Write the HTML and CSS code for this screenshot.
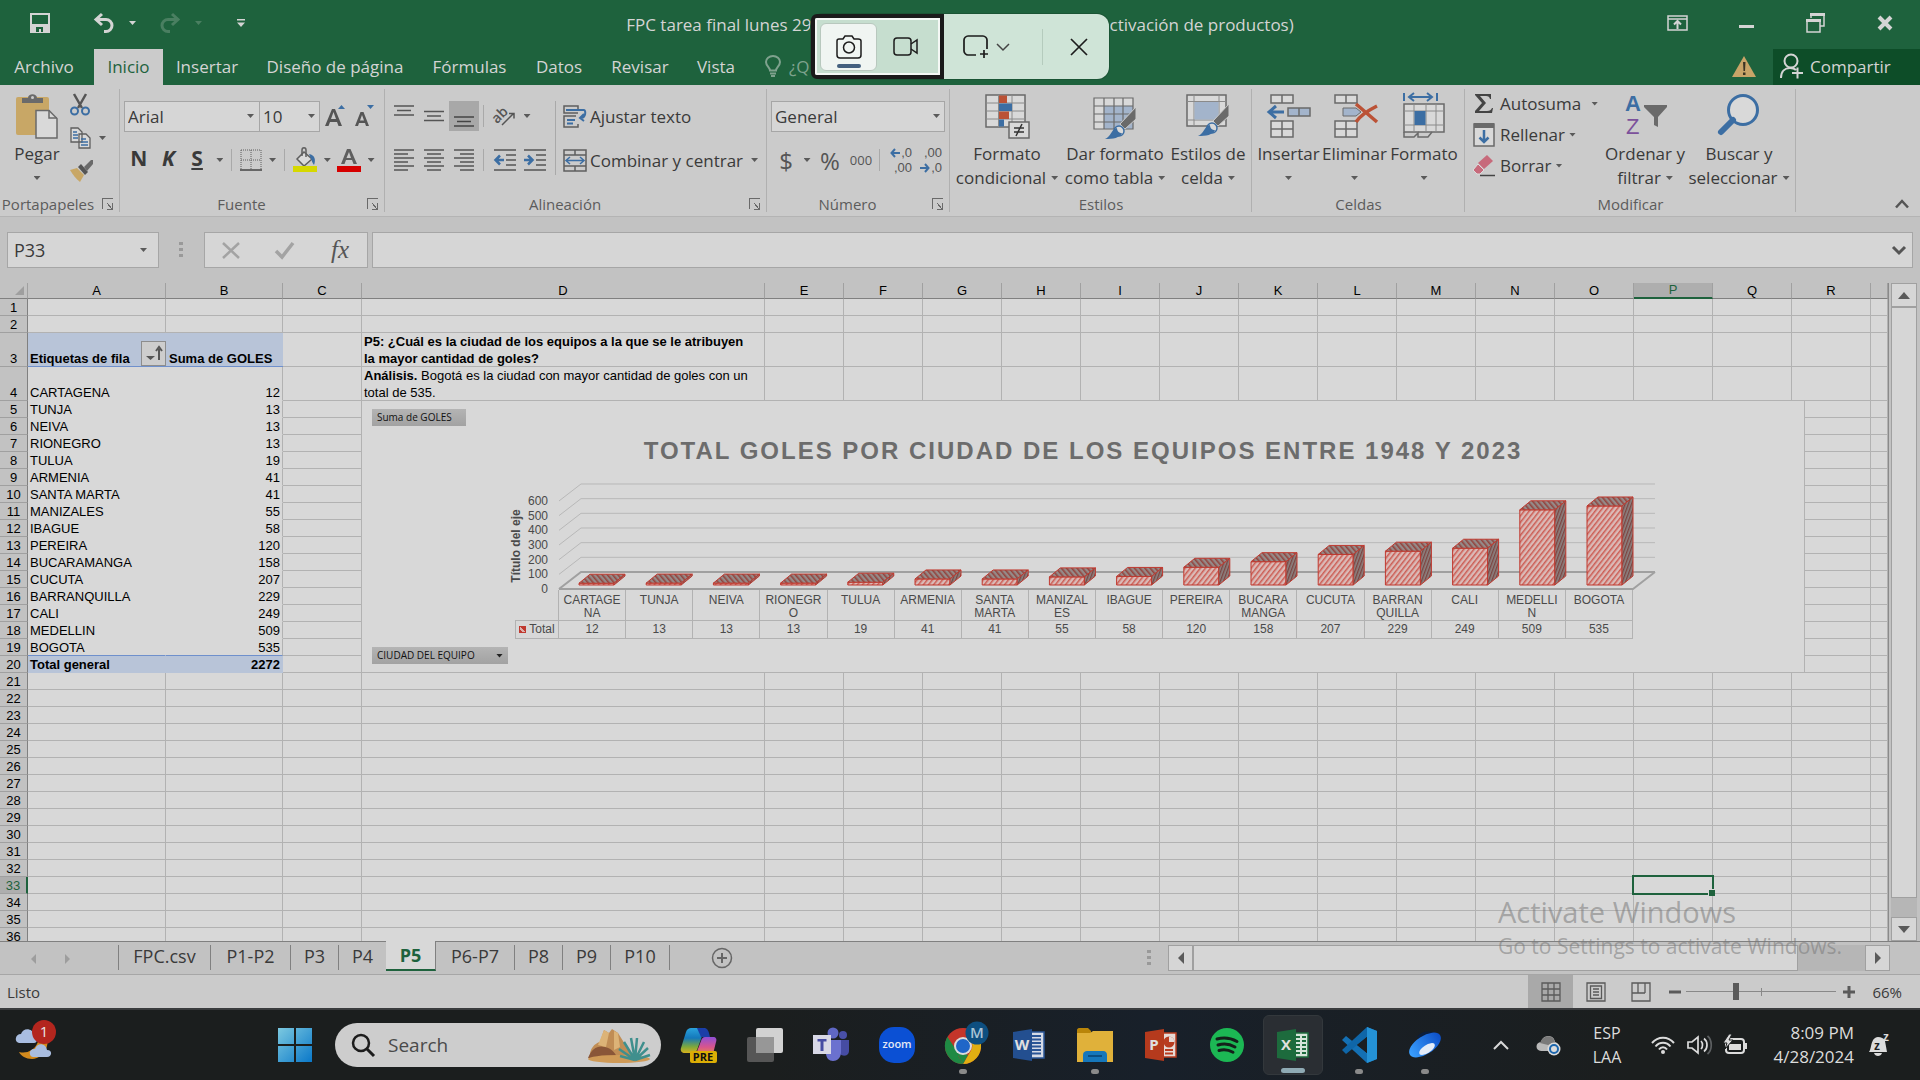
FILE: index.html
```html
<!DOCTYPE html>
<html lang="es">
<head>
<meta charset="utf-8">
<title>FPC tarea final - Excel</title>
<link rel="stylesheet" href="styles.css">
</head>
<body>
<div class="app">
  <header class="titlebar">
    <nav class="quick">
      <button aria-label="Guardar"><svg width="20" height="20"><path d="M1 1h18v18H1z" fill="none" stroke="#d4d4d4" stroke-width="2"/><path d="M2 11h16v8H2z" fill="#d4d4d4"/><path d="M6 14h7v5h-2v-3H9v3H6z" fill="#1e623d"/></svg></button>
      <button class="undo" aria-label="Deshacer"><svg width="22" height="20"><path d="M9 1 3 6.500l6 5.500M4 6.500h9a6 6 0 0 1 0 12h-2" fill="none" stroke="#d4d4d4" stroke-width="3"/></svg></button>
      <i class="caret"></i>
      <button class="redo" aria-label="Rehacer"><svg width="22" height="20"><path d="M13 1l6 5.500-6 5.500M18 6.500H9a6 6 0 0 0 0 12h2" fill="none" stroke="#4a7f61" stroke-width="3"/></svg></button>
      <i class="caret dim"></i>
      <button class="more" aria-label="Personalizar"><svg width="8" height="8"><path d="M0 0h8v1.500H0zM0 3.500h8L4 8z" fill="#d4d4d4"/></svg></button>
    </nav>
    <h1 class="doc"><span>FPC tarea final lunes 29</span><span>ctivación de productos)</span></h1>
    <div class="winctl">
      <button aria-label="Opciones de cinta"><svg width="21" height="16"><path d="M1 1h19v14H1zM1 4h19" fill="none" stroke="#d4d4d4" stroke-width="1.500"/><path d="M10.500 14V6M7 9.500 10.500 6 14 9.500" fill="none" stroke="#d4d4d4" stroke-width="2"/></svg></button>
      <button aria-label="Minimizar"><svg width="16" height="16"><path d="M0 10h15v3H0z" fill="#d4d4d4"/></svg></button>
      <button aria-label="Restaurar"><svg width="20" height="20"><path d="M5 5V2h13v11h-4" fill="none" stroke="#d4d4d4" stroke-width="1.500"/><path d="M4 0h15v3H4zM0 6h15v3H0z" fill="#d4d4d4"/><path d="M1 8h13v11H1z" fill="none" stroke="#d4d4d4" stroke-width="1.500"/></svg></button>
      <button aria-label="Cerrar"><svg width="16" height="16"><path d="M2 2l12 12M14 2 2 14" stroke="#d4d4d4" stroke-width="4"/></svg></button>
    </div>
  </header>

  <div class="tabbar">
    <nav class="tabs">
      <button class="file">Archivo</button><button class="on">Inicio</button><button>Insertar</button><button>Diseño de página</button><button>Fórmulas</button><button>Datos</button><button>Revisar</button><button>Vista</button>
      <button class="tell"><svg width="16" height="22"><path d="M5 15.500c0-3-4-4.500-4-8.500a7 6 0 0 1 14 0c0 4-4 5.500-4 8.500zM5 18.500h6M6 21h4" fill="none" stroke="#7fa28e" stroke-width="2"/></svg>¿Q</button>
    </nav>
    <div class="tabright">
      <svg class="warn" width="24" height="22"><path d="M12 0 24 21H0z" fill="#c9a468"/><path d="M11 6h2.500l-.5 9h-1.500zM11 16.500h2.500V19H11z" fill="#3c3424"/></svg>
      <button class="share"><svg width="24" height="26"><circle cx="11" cy="8" r="6.500" fill="none" stroke="#d4d4d4" stroke-width="2"/><path d="M1 25c0-7 4-10 9-10 3 0 5 1 6 2M12 20h11M17.500 14.500v11" fill="none" stroke="#d4d4d4" stroke-width="2"/></svg>Compartir</button>
    </div>
  </div>

  <section class="ribbon">
    <div class="group">
      <div class="body clip">
        <button class="big paste"><svg width="42" height="46"><rect x="0" y="4" width="33" height="38" rx="2" fill="#c8a766"/><path d="M6 10V5h6c0-5 9-5 9 0h6v5z" fill="#6a6a6a"/><circle cx="16.500" cy="4.500" r="1.500" fill="#ccc"/><path d="M20 17.500h13l8 8V45H20z" fill="#d9d9d9" stroke="#6a6a6a" stroke-width="1.500"/><path d="M33 17v8h8" fill="none" stroke="#6a6a6a" stroke-width="1.500"/></svg><span>Pegar</span><span class="only"><i class="caret"></i></span></button>
        <div class="stack">
          <button aria-label="Cortar"><svg width="20" height="22"><path d="M4 0l8 14M16 0 8 14" stroke="#555" stroke-width="2.500"/><circle cx="4.500" cy="17" r="3.500" fill="none" stroke="#3c6ea3" stroke-width="2"/><circle cx="15.500" cy="17" r="3.500" fill="none" stroke="#3c6ea3" stroke-width="2"/></svg></button>
          <button aria-label="Copiar"><svg width="21" height="22"><g fill="#d9d9d9" stroke="#5f5f5f" stroke-width="1.300"><path d="M1 1h7l4 4v10H1zM9 7h7l4 4v10H9z"/></g><path d="M3 5h4M3 8h5M3 11h5M11 12h5M11 15h7M11 18h7" stroke="#3c6ea3" stroke-width="1.500"/></svg><i class="caret"></i></button>
          <button aria-label="Copiar formato"><svg width="24" height="22"><path d="M0 10l7-2 7 7-4 7C6 19 3 15 0 10z" fill="#c8a766"/><path d="M8 7l3-3 7 8-3 3z" fill="#555"/><path d="M14 7l7-7h2v4l-6 7z" fill="#6a6a6a"/></svg></button>
        </div>
      </div>
      <footer><span>Portapapeles</span><button class="launch" aria-label="Portapapeles"></button></footer>
    </div>

    <div class="group">
      <div class="body rows">
        <div class="row">
          <label class="combo font"><select aria-label="Fuente"><option>Arial</option></select></label>
          <label class="combo size"><select aria-label="Tamaño"><option>10</option></select></label>
          <button class="w30" aria-label="Aumentar fuente"><svg width="22" height="22"><path d="M1 21 8 4h3l7 17h-3.500l-1.500-4H6l-1.500 4zM7 14h5L9.500 7z" fill="#555"/><path d="M14 4l3.500-4L21 4z" fill="#3c6ea3"/></svg></button>
          <button class="w30" aria-label="Disminuir fuente"><svg width="20" height="22"><path d="M0 21 5.500 7h3L14 21h-3l-1-3H4l-1 3zM5 15.500h4L7 10z" fill="#555"/><path d="M12 0h7l-3.500 4z" fill="#3c6ea3"/></svg></button>
        </div>
        <div class="row">
          <button class="w30 fmt"><b>N</b></button><button class="w30 fmt"><b><em>K</em></b></button><button class="w28 fmt"><b><u>S</u></b></button><span class="w18"><i class="caret"></i></span>
          <i class="sep s1"></i>
          <button class="w22" aria-label="Bordes"><svg width="22" height="22"><path d="M1 1h20v20M1 1v20M11 1v20M1 11h20" fill="none" stroke="#5f5f5f" stroke-dasharray="1 1"/><path d="M0 21h22" stroke="#444" stroke-width="1.500"/></svg></button><span class="w22"><i class="caret"></i></span>
          <i class="sep s2"></i>
          <button class="w24" aria-label="Relleno"><svg width="24" height="24"><path d="M4 11l7-7 8 7-8 7z" fill="#dadada" stroke="#5f5f5f" stroke-width="1.500"/><path d="M9 8V2c0-3 4-3 4 0v7" fill="none" stroke="#5f5f5f" stroke-width="1.500"/><path d="M16 6c6 1 7 6 5 11-2-2-2-5-3-6z" fill="#3c6ea3"/><path d="M0 18h24v6H0z" fill="#d6d800"/></svg></button><span class="w20"><i class="caret"></i></span>
          <button class="w24" aria-label="Color de fuente"><svg width="24" height="24"><path d="M4 16 10 1h3.500L20 16h-3.500l-1.500-4H9l-1.500 4zM9.500 10h4.500L12 4z" fill="#5f5f5f"/><path d="M0 18h24v6H0z" fill="#d60000"/></svg></button><span class="w20"><i class="caret"></i></span>
        </div>
      </div>
      <footer><span>Fuente</span><button class="launch" aria-label="Fuente"></button></footer>
    </div>

    <div class="group">
      <div class="body align">
        <div class="rows">
          <div class="row">
            <button class="w30" aria-label="Superior"><svg width="20" height="22"><path d="M0 1h20M3 5.500h14M0 10h20" stroke="#555" stroke-width="1.500"/></svg></button>
            <button class="w30" aria-label="Medio"><svg width="20" height="22"><path d="M0 6.500h20M3 11h14M0 15.500h20" stroke="#555" stroke-width="1.500"/></svg></button>
            <button class="w30 pressed" aria-label="Inferior"><svg width="20" height="22"><path d="M0 12h20M3 16.500h14M0 21h20" stroke="#444" stroke-width="1.500"/></svg></button>
            <i class="sep s3"></i>
            <button class="w30" aria-label="Orientación"><svg width="22" height="22"><text x="-2" y="13" transform="rotate(-45 8 10)" class="ab">ab</text><path d="M8 20 19 9M15 8.500h5v5" fill="none" stroke="#555" stroke-width="1.500"/></svg></button><span class="w14"><i class="caret"></i></span>
          </div>
          <div class="row">
            <button class="w30" aria-label="Izquierda"><svg width="20" height="22"><path d="M0 1h20M0 5h14M0 9h20M0 13h14M0 17h20M0 21h14" stroke="#555" stroke-width="1.500"/></svg></button>
            <button class="w30" aria-label="Centro"><svg width="20" height="22"><path d="M0 1h20M3 5h14M0 9h20M3 13h14M0 17h20M3 21h14" stroke="#555" stroke-width="1.500"/></svg></button>
            <button class="w30" aria-label="Derecha"><svg width="20" height="22"><path d="M0 1h20M6 5h14M0 9h20M6 13h14M0 17h20M6 21h14" stroke="#555" stroke-width="1.500"/></svg></button>
            <i class="sep s3"></i>
            <button class="w30" aria-label="Disminuir sangría"><svg width="22" height="22"><path d="M0 1h22M12 6h10M12 11h10M12 16h10M0 21h22" stroke="#555" stroke-width="1.500"/><path d="M10 11H2M6 6.500 1.500 11 6 15.500" fill="none" stroke="#3c6ea3" stroke-width="2.500"/></svg></button>
            <button class="w30" aria-label="Aumentar sangría"><svg width="22" height="22"><path d="M0 1h22M12 6h10M12 11h10M12 16h10M0 21h22" stroke="#555" stroke-width="1.500"/><path d="M0 11h8M4 6.500 8.500 11 4 15.500" fill="none" stroke="#3c6ea3" stroke-width="2.500"/></svg></button>
          </div>
        </div>
        <i class="sep long"></i>
        <div class="rows wide">
          <button class="row text"><svg width="24" height="23"><g fill="none" stroke="#5f5f5f" stroke-width="1.500"><path d="M15 5V1H1v7h14M15 19v3H1V11h12"/></g><path d="M3 5h18c2 0 2 8-3 8M21 9l-4 4 4 3M4 15h8M4 18.500h6" fill="none" stroke="#3c6ea3" stroke-width="2"/></svg>Ajustar texto</button>
          <button class="row text"><svg width="24" height="23"><path d="M1 1h22v21H1zM1 6h22M1 17h22M12 1v5M12 17v5" fill="none" stroke="#5f5f5f" stroke-width="1.500"/><path d="M3 11.500h18M7 8l-4 3.500L7 15M17 8l4 3.500-4 3.500" fill="none" stroke="#3c6ea3" stroke-width="1.500"/></svg>Combinar y centrar<i class="caret"></i></button>
        </div>
      </div>
      <footer><span>Alineación</span><button class="launch" aria-label="Alineación"></button></footer>
    </div>

    <div class="group">
      <div class="body rows">
        <div class="row"><label class="combo num"><select aria-label="Formato de número"><option>General</option></select></label></div>
        <div class="row">
          <button class="w30 money">$</button><span class="w12"><i class="caret"></i></span><button class="w34 money">%</button><button class="w28 zeros">000</button>
          <i class="sep s4"></i>
          <button class="w30 dec" aria-label="Aumentar decimales"><span><svg width="10" height="10"><path d="M10 5H2M5 1 1.500 5 5 9" fill="none" stroke="#3c6ea3" stroke-width="2"/></svg>,0</span><span>,00</span></button>
          <button class="w30 dec" aria-label="Disminuir decimales"><span>,00</span><span><svg width="10" height="10"><path d="M0 5h8M5 1l3.500 4L5 9" fill="none" stroke="#3c6ea3" stroke-width="2"/></svg>,0</span></button>
        </div>
      </div>
      <footer><span>Número</span><button class="launch" aria-label="Número"></button></footer>
    </div>

    <div class="group">
      <div class="body bigs styles">
        <button class="big"><svg width="46" height="46"><path d="M2 2h39v32H2z" fill="#d9d9d9" stroke="#6a6a6a" stroke-width="1.500"/><path d="M14.500 2v32M28 2v32M2 10h39M2 18h39M2 26h39" stroke="#8a8a8a"/><path d="M15 2.500h8v7.500h-8zM15 18.500h10v7.500H15z" fill="#bb5236"/><path d="M15 10.500h13v7.500H15zM15 26.500h5v7h-5z" fill="#3c6ea3"/><path d="M25 29h20v16H25z" fill="#d9d9d9" stroke="#6a6a6a" stroke-width="1.500"/><path d="M30 35h10M30 39h10M38 31l-6 12" stroke="#333" stroke-width="1.500"/></svg><span>Formato</span><span>condicional<i class="caret"></i></span></button>
        <button class="big"><svg width="46" height="46"><path d="M2 5h39v31H2z" fill="#d9d9d9"/><path d="M12 13h29v23H12z" fill="#a3b4cb"/><path d="M2 5h39v31H2zM2 13h39M2 21h39M2 29h39M12 5v31M22 5v31M31 5v31" fill="none" stroke="#6a6a6a" stroke-width="1.200"/><path d="M44 14v12L33 36l-5-5z" fill="#6a6a6a" stroke="#ccc"/><circle cx="27" cy="38" r="5" fill="#d9d9d9" stroke="#3c6ea3" stroke-width="1.500"/><path d="M13 46c6-2 6-10 12-11 0 3 2 5 5 5-2 5-9 6-17 6z" fill="#3c6ea3"/></svg><span>Dar formato</span><span>como tabla<i class="caret"></i></span></button>
        <button class="big"><svg width="46" height="46"><path d="M2 2h39v31H2z" fill="#d9d9d9" stroke="#6a6a6a" stroke-width="1.500"/><path d="M9 2v31M34 2v31M2 8.500h39M2 27h39" stroke="#8a8a8a"/><path d="M9.500 9h24v17.500h-24z" fill="#a3b4cb"/><path d="M44 11v12L33 33l-5-5z" fill="#6a6a6a" stroke="#ccc"/><circle cx="27" cy="35" r="5" fill="#d9d9d9" stroke="#3c6ea3" stroke-width="1.500"/><path d="M13 43c6-2 6-10 12-11 0 3 2 5 5 5-2 5-9 6-17 6z" fill="#3c6ea3"/></svg><span>Estilos de</span><span>celda<i class="caret"></i></span></button>
      </div>
      <footer><span>Estilos</span></footer>
    </div>

    <div class="group">
      <div class="body bigs cells">
        <button class="big"><svg width="46" height="46"><g fill="#d9d9d9" stroke="#6a6a6a" stroke-width="1.500"><path d="M5 2h22v8H5zM5 28h22v16H5zM5 36h22M16 2v8M16 28v16"/></g><path d="M22 15h22v8H22zM33 15v8" fill="#a3b4cb" stroke="#6a6a6a" stroke-width="1.500"/><path d="M18 19H4M10 13l-7 6 7 6" fill="none" stroke="#3c6ea3" stroke-width="3"/></svg><span>Insertar</span><span class="only"><i class="caret"></i></span></button>
        <button class="big"><svg width="46" height="46"><g fill="#d9d9d9" stroke="#6a6a6a" stroke-width="1.500"><path d="M3 2h22v8H3zM3 28h22v16H3zM3 36h22M14 2v8M14 28v16"/></g><path d="M11 15h13l5 4-5 4H11z" fill="#a3b4cb" stroke="#6a6a6a"/><path d="M24 11c7 6 14 12 21 18M45 13C35 18 28 23 24 29" fill="none" stroke="#bb5236" stroke-width="3.500"/></svg><span>Eliminar</span><span class="only"><i class="caret"></i></span></button>
        <button class="big"><svg width="46" height="46"><path d="M3 0v8M36 0v8M8 4h23M13 0 8 4l5 4M26 0l5 4-5 4" fill="none" stroke="#3c6ea3" stroke-width="2"/><path d="M3 11h40v28H3z" fill="#d9d9d9" stroke="#6a6a6a" stroke-width="1.500"/><path d="M13 11v28M25 11v28M35 11v28M3 18h40M3 32h40" stroke="#8a8a8a"/><path d="M13.500 18h11v14h-11z" fill="#3c6ea3"/><path d="M3 39v5h10l4-4v4h10l4-5" fill="none" stroke="#6a6a6a" stroke-width="1.500"/></svg><span>Formato</span><span class="only"><i class="caret"></i></span></button>
      </div>
      <footer><span>Celdas</span></footer>
    </div>

    <div class="group">
      <div class="body edit">
        <div class="edits">
          <button><svg width="23" height="23"><path d="M2 2h16v5h-1c-.5-2-1.500-3-4-3H7l6 7-7 8h8c3 0 4-1 5-3h1l-1 5H2v-2l7-8-7-8z" fill="#444"/></svg>Autosuma<i class="caret far"></i></button>
          <button><svg width="23" height="24"><path d="M1 1h20v22H1z" fill="#d9d9d9" stroke="#6a6a6a" stroke-width="1.500"/><path d="M1 0h20v5H1z" fill="#6a6a6a"/><path d="M11 7v12M6.500 14.500 11 19l4.500-4.500" fill="none" stroke="#3c6ea3" stroke-width="2.500"/></svg>Rellenar<i class="caret"></i></button>
          <button><svg width="23" height="22"><path d="M14 0l6 6-9 8-6-6z" fill="#c76a7b"/><path d="M5 9l6 6-4 4H4l-4-4z" fill="#c76a7b" stroke="#ddd" stroke-width="1"/><path d="M7 20.500h15" stroke="#444" stroke-width="1.500"/></svg>Borrar<i class="caret"></i></button>
        </div>
        <button class="big sort"><svg width="46" height="46"><text x="3" y="18" class="az blue">A</text><text x="4" y="41" class="az violet">Z</text><path d="M22 12h23v2L36 24v10l-4-2v-8L22 14z" fill="#6a6a6a"/></svg><span>Ordenar y</span><span>filtrar<i class="caret"></i></span></button>
        <button class="big find"><svg width="46" height="46"><circle cx="27" cy="17" r="14.500" fill="#d9d9d9" stroke="#3c6ea3" stroke-width="3"/><path d="M17 27 5 39" stroke="#3c6ea3" stroke-width="6" stroke-linecap="round"/></svg><span>Buscar y</span><span>seleccionar<i class="caret"></i></span></button>
      </div>
      <footer><span>Modificar</span></footer>
    </div>
    <button class="collapse" aria-label="Contraer"><svg width="14" height="10"><path d="M1 8.500 7 2l6 6.500" fill="none" stroke="#555" stroke-width="2.500"/></svg></button>
  </section>

  <div class="formula">
    <label class="namebox"><input aria-label="Cuadro de nombres" value="P33"><i class="caret"></i></label>
    <i class="dots"></i>
    <div class="fx">
      <button aria-label="Cancelar"><svg width="18" height="17"><path d="M1 1l16 15M17 1 1 16" stroke="#a3a3a3" stroke-width="2.500"/></svg></button>
      <button aria-label="Introducir"><svg width="20" height="17"><path d="M1 9l6 6L18 1" fill="none" stroke="#a3a3a3" stroke-width="3.500"/></svg></button>
      <button class="fn">fx</button>
    </div>
    <label class="bar"><input aria-label="Barra de fórmulas"><svg width="14" height="9"><path d="M1 1l6 6 6-6" fill="none" stroke="#555" stroke-width="3"/></svg></label>
  </div>

  <main class="work">
    <div class="sheet">
      <table class="grid" id="grid"></table>
      <figure class="chart">
        <button class="field">Suma de GOLES</button>
        <figcaption>TOTAL GOLES POR CIUDAD DE LOS EQUIPOS ENTRE 1948 Y 2023</figcaption>
        <svg id="plot" class="plot" width="1442" height="126"></svg>
        <table class="data" id="data"></table>
        <button class="field city">CIUDAD DEL EQUIPO<i class="caret"></i></button>
      </figure>
    </div>
    <div class="vscroll">
      <button aria-label="Subir"><svg width="12" height="7"><path d="M0 7h12L6 0z" fill="#5a5a5a"/></svg></button>
      <i class="thumb"></i><i class="track"></i>
      <button aria-label="Bajar"><svg width="12" height="7"><path d="M0 0h12L6 7z" fill="#5a5a5a"/></svg></button>
    </div>
  </main>

  <div class="sheetbar">
    <div class="arrows"><svg width="5" height="10"><path d="M5 0v10L0 5z" fill="#9d9d9d"/></svg><svg width="5" height="10"><path d="M0 0v10l5-5z" fill="#9d9d9d"/></svg></div>
    <nav class="sheets"><button>FPC.csv</button><button>P1-P2</button><button>P3</button><button>P4</button><button class="on">P5</button><button>P6-P7</button><button>P8</button><button>P9</button><button>P10</button></nav>
    <button class="add" aria-label="Hoja nueva"><svg width="22" height="22"><circle cx="11" cy="11" r="9.500" fill="none" stroke="#666" stroke-width="1.500"/><path d="M11 6v10M6 11h10" stroke="#666" stroke-width="2"/></svg></button>
    <i class="dots"></i>
    <div class="hscroll">
      <button aria-label="Izquierda"><svg width="6" height="12"><path d="M6 0v12L0 6z" fill="#5a5a5a"/></svg></button>
      <i class="thumb"></i><i class="track"></i>
      <button aria-label="Derecha"><svg width="6" height="12"><path d="M0 0v12l6-6z" fill="#5a5a5a"/></svg></button>
    </div>
  </div>

  <div class="status">
    <span>Listo</span>
    <div class="views">
      <button class="on" aria-label="Normal"><svg width="20" height="20"><path d="M1 1h18v18H1zM7 1v18M13 1v18M1 7h18M1 13h18" fill="none" stroke="#5a5a5a" stroke-width="1.300"/></svg></button>
      <button aria-label="Diseño de página"><svg width="20" height="20"><path d="M1 1h18v18H1zM4.500 4h11v12.500h-11zM7 7h6M7 10h6M7 13h6" fill="none" stroke="#5a5a5a" stroke-width="1.300"/></svg></button>
      <button aria-label="Saltos de página"><svg width="20" height="20"><path d="M1 1h18v18H1zM1 11h13M7 1v10M14 1v10" fill="none" stroke="#5a5a5a" stroke-width="1.300"/></svg></button>
    </div>
    <button class="zoombtn minus" aria-label="Alejar"><svg width="14" height="14"><path d="M1 7h12" stroke="#5a5a5a" stroke-width="3"/></svg></button>
    <input class="zoom" type="range" aria-label="Zoom" value="32">
    <button class="zoombtn plus" aria-label="Acercar"><svg width="14" height="14"><path d="M1 7h12M7 1v12" stroke="#5a5a5a" stroke-width="3"/></svg></button>
    <span class="pct">66%</span>
  </div>

  <footer class="taskbar">
    <button class="weather" aria-label="El tiempo"><svg width="44" height="44">
      <path d="M29 12c8 10 2 27-12 28-6 0-11-3-13-7 8 2 15-2 18-8 2-4 4-9 7-13z" fill="#d38a1d"/>
      <path d="M4 24c-5-1-4-9 2-9 2-7 12-6 13 1 4 1 4 8 0 8z" fill="#a9bde0"/><path d="M18 38c-5-1-4-9 2-8 2-7 11-6 12 1 6 0 5 7 0 7z" fill="#a9bde0"/>
      <circle cx="29" cy="13" r="12" fill="#b3261e"/><text x="29" y="18" class="badge">1</text></svg></button>
    <button class="start" aria-label="Inicio"><svg width="36" height="36"><defs><linearGradient id="win" x1="0" y1="0" x2="1" y2="1"><stop offset="0" stop-color="#7cc9e0"/><stop offset="1" stop-color="#0a78c9"/></linearGradient></defs><path d="M1 1h16v16H1zM19 1h16v16H19zM1 19h16v16H1zM19 19h16v16H19z" fill="url(#win)"/></svg></button>
    <label class="search"><svg width="24" height="24"><circle cx="10" cy="10" r="8" fill="none" stroke="#1c1c1c" stroke-width="2.500"/><path d="M16 16l7 7" stroke="#1c1c1c" stroke-width="3"/></svg><input type="search" placeholder="Search" aria-label="Search">
      <svg width="64" height="36"><path d="M3 30C2 22 8 16 13 15L17 3l5 3 3-4 6 4 5 8 8 14v6z" fill="#c08d55"/><path d="M1 31c4-10 10-13 17-11 7 1 12 8 13 13z" fill="#8a5638"/><path d="M17 3l5 3-3 14-8-2zM27 4l4 2 2 14-6 3z" fill="#dcb377"/><ellipse cx="32" cy="32" rx="31" ry="4" fill="#cf9a57"/><g stroke="#3f8f8d" stroke-width="2.500"><path d="M48 33 32 22M48 33 37 15M48 33 44 11M48 33l2-22M48 33l9-18M48 33l13-12M48 33l15-5M48 33 33 29"/></g></svg></label>
    <nav class="apps">
      <button aria-label="Copilot"><svg width="36" height="36"><defs><linearGradient id="cp1" x1="0" y1="0" x2="0" y2="1"><stop offset="0" stop-color="#2aa2dc"/><stop offset=".4" stop-color="#1478bb"/><stop offset=".75" stop-color="#7ea83c"/><stop offset="1" stop-color="#d8b21c"/></linearGradient><linearGradient id="cp2" x1="0" y1="0" x2="0" y2="1"><stop offset="0" stop-color="#8f4fd6"/><stop offset=".6" stop-color="#d9558c"/><stop offset="1" stop-color="#e08a4a"/></linearGradient></defs><path d="M10 1h14l-8 22c-1 2-2 3-4 3H4c-3 0-5-2-4-5L5 5c1-3 3-4 5-4z" fill="url(#cp1)"/><path d="M16 1h7c3 0 4 2 5 5l1 4h-9z" fill="#1a3ea8"/><path d="M24 10h8c3 0 4 2 3 5l-3 12H15l5-13c1-3 2-4 4-4z" fill="url(#cp2)"/><rect x="9" y="24" width="27" height="12" rx="2" fill="#dcae05"/><text x="22" y="34" class="pre">PRE</text></svg></button>
      <button aria-label="Vista de tareas"><svg width="36" height="36"><rect x="0" y="10" width="27" height="25" rx="2" fill="#565656"/><rect x="9" y="1" width="27" height="25" rx="2" fill="#d2d2d2"/><path d="M9 10h18v16H9z" fill="#979797"/></svg></button>
      <button aria-label="Teams"><svg width="36" height="36"><circle cx="20" cy="6" r="5.500" fill="#5f67c4"/><circle cx="30" cy="8" r="4" fill="#4950a8"/><path d="M25 13h11v11c0 5-6 6-9 3z" fill="#464ca3"/><path d="M13 13h15v12c0 6-4 9-8 9s-7-3-7-8z" fill="#6b71cf"/><path d="M0 8h18v19H0z" fill="#d8d8e6"/><path d="M4.500 12h9v2.500h-3V24h-3v-9.500h-3z" fill="#464ca3"/></svg></button>
      <button aria-label="Zoom"><svg width="36" height="36"><rect width="36" height="36" rx="15" fill="#0b50d4"/><text x="18" y="21" class="zm">zoom</text></svg></button>
      <button class="run" aria-label="Chrome"><svg width="46" height="46"><circle cx="23" cy="24" r="18" fill="#c4352a"/><path d="M7.400 15 15 28.500 23 42A18 18 0 0 1 7.400 15z" fill="#1f8a44"/><path d="M23 42l8-13.500a9 9 0 0 0 0-9L41 22a18 18 0 0 1-18 20z" fill="#e0ae12"/><path d="M7.400 15a18 18 0 0 0 8 23L19 32z" fill="#1f8a44"/><path d="M15 28 23 42l5-9z" fill="#1f8a44"/><circle cx="23" cy="24" r="9" fill="#dcdcdc"/><circle cx="23" cy="24" r="7" fill="#1f66c8"/><circle cx="37" cy="11" r="11.500" fill="#0e4f80"/><text x="37" y="16" class="prof">M</text></svg></button>
      <button aria-label="Word"><svg width="32" height="34"><path d="M16 4h15v26H16z" fill="#d6dbe6" stroke="#2a5596" stroke-width="1.500"/><path d="M19 8h9M19 11.500h9M19 15h9M19 18.500h9M19 22h9M19 25.500h9" stroke="#2a5596" stroke-width="2"/><path d="M0 4 19 1v32L0 30z" fill="#234f90"/><text x="9" y="22" class="ltr">W</text></svg></button>
      <button class="run" aria-label="Explorador"><svg width="36" height="36"><path d="M0 3c0-1 1-2 2-2h9l3 3v5H0z" fill="#b98509"/><path d="M0 6h13l3-2h20v31H0z" fill="#e0b13a"/><path d="M6 35V28c0-3 2-4 4-4h16c3 0 4 2 4 4v7z" fill="#1677bb"/><path d="M11 29h14" stroke="#0b4f83" stroke-width="2"/></svg></button>
      <button aria-label="PowerPoint"><svg width="32" height="34"><path d="M16 5h15v24H16z" fill="#e6dad6" stroke="#b83c20" stroke-width="1.500"/><path d="M20 22h8M20 25.500h8" stroke="#b83c20" stroke-width="2"/><circle cx="24" cy="14" r="5.500" fill="#b83c20"/><path d="M24 14V8.500a5.500 5.500 0 0 1 5.500 5.500z" fill="#e6dad6"/><path d="M0 4 19 1v32L0 30z" fill="#b53a1d"/><text x="9" y="22" class="ltr">P</text></svg></button>
      <button aria-label="Spotify"><svg width="34" height="34"><circle cx="17" cy="17" r="17" fill="#1cb854"/><path d="M7 11c7-2 14-1 20 2.500M8 17c6-2 12-1 17 2M9 22.500c5-1.500 10-.5 14 1.800" fill="none" stroke="#14201a" stroke-width="3" stroke-linecap="round"/></svg></button>
      <button class="cur" aria-label="Excel"><svg width="32" height="34"><path d="M16 5h15v24H16z" fill="#d6e4da" stroke="#1d6b3d" stroke-width="1.500"/><path d="M19 9h4M25 9h4M19 13h4M25 13h4M19 17h4M25 17h4M19 21h4M25 21h4M19 25h4M25 25h4" stroke="#1d6b3d" stroke-width="2"/><path d="M0 4 19 1v32L0 30z" fill="#1d6b3d"/><text x="9" y="22" class="ltr">X</text></svg></button>
      <button class="run" aria-label="Visual Studio Code"><svg width="38" height="38"><path d="M27 1l10 4v28l-10 4L2 14l4-4 21 17z" fill="#1470b4"/><path d="M27 1l10 4v28l-10 4V27z" fill="#2492d6"/><path d="M27 1 2 24l4 4 21-17z" fill="#0f66a8"/><path d="M27 11v16L17 19z" fill="#1b1e20"/></svg></button>
      <button class="run" aria-label="Yandex"><svg width="34" height="36"><defs><linearGradient id="lf" x1="0" y1="0" x2="1" y2="0"><stop offset="0" stop-color="#3aa0ff"/><stop offset="1" stop-color="#0d4fc8"/></linearGradient></defs><path d="M9 10c5-7 16-7 21-2L20 14z" fill="#0b1e3e"/><ellipse cx="17" cy="18" rx="18" ry="9" transform="rotate(-33 17 18)" fill="url(#lf)"/><ellipse cx="19" cy="22" rx="9" ry="4" transform="rotate(-33 19 22)" fill="#e4ecf8"/></svg></button>
    </nav>
    <div class="tray">
      <svg width="16" height="10"><path d="M1 9l7-7 7 7" fill="none" stroke="#d8d8d8" stroke-width="2"/></svg>
      <svg class="cloud" width="26" height="22"><path d="M5 17C-1 17-1 8 5 8 7 0 18 0 19 8c5 1 5 9 0 9z" fill="#b9b9b9"/><path d="M4 9c3-9 14-9 15 0l-7 2z" fill="#7a7a7a"/><circle cx="18" cy="15" r="6.500" fill="#dcdcdc"/><circle cx="18" cy="15" r="4" fill="none" stroke="#1c66ad" stroke-width="2"/></svg>
      <span class="lang">ESP<br>LAA</span>
      <svg class="wifi" width="24" height="18"><g fill="none" stroke="#dcdcdc" stroke-width="2"><path d="M1 7c6-7 16-7 22 0M4.500 10.500c4-5 11-5 15 0M8 13.500c2-3 6-3 8 0"/></g><circle cx="12" cy="16" r="2" fill="#dcdcdc"/></svg>
      <svg class="snd" width="25" height="20"><path d="M1 7h4l6-5v16l-6-5H1z" fill="none" stroke="#dcdcdc" stroke-width="1.700"/><path d="M14 6c2 2 2 6 0 8M17 3.500c4 3 4 10 0 13" fill="none" stroke="#dcdcdc" stroke-width="1.700"/><path d="M20.500 1c5 4 5 14 0 18" fill="none" stroke="#5c5f61" stroke-width="1.700"/></svg>
      <svg class="bat" width="25" height="20"><rect x="3" y="4" width="18" height="14" rx="3" fill="none" stroke="#dcdcdc" stroke-width="2"/><path d="M6 9h12v6H6zM22 8h2v6h-2z" fill="#dcdcdc"/><path d="M6-1 0 8h4l-2 6 8-9H6l3-6z" fill="#dcdcdc" stroke="#1b1e1f"/></svg>
      <span class="clock">8:09 PM<br>4/28/2024</span>
      <svg class="bell" width="22" height="24"><path d="M1 19c3-3 1-14 9-15 3 0 6 1 7 4l2 11zM6 20h8c-1 4-7 4-8 0z" fill="#dcdcdc"/><text x="9" y="17" class="z1">z</text><text x="18" y="8" class="z2">z</text></svg>
    </div>
  </footer>

  <aside class="mark"><p>Activate Windows</p><p>Go to Settings to activate Windows.</p></aside>

  <div class="snip">
    <div class="modes">
      <button class="on" aria-label="Captura"><svg width="26" height="24"><path d="M1 6c0-1 1-2 2-2h4l2-3h7l2 3h4c2 0 3 1 3 2v14c0 2-1 3-3 3H4c-2 0-3-1-3-3z" fill="none" stroke="#1c1c1c" stroke-width="1.500"/><circle cx="13" cy="12.500" r="5.500" fill="none" stroke="#1c1c1c" stroke-width="1.500"/></svg></button>
      <button aria-label="Grabar"><svg width="26" height="20"><rect x="1" y="1" width="17" height="17" rx="3" fill="none" stroke="#1c1c1c" stroke-width="1.500"/><path d="M18 7l6-4v13l-6-4" fill="none" stroke="#1c1c1c" stroke-width="1.500"/></svg></button>
    </div>
    <button class="shape" aria-label="Forma"><svg width="46" height="24"><path d="M13 20H5c-2 0-4-2-4-4V5c0-2 2-4 4-4h15c2 0 4 2 4 4v9" fill="none" stroke="#1c1c1c" stroke-width="1.700"/><path d="M21 15v8M17 19h8" stroke="#1c1c1c" stroke-width="1.700"/><path d="M34 9l6 6 6-6" fill="none" stroke="#444" stroke-width="1.500"/></svg></button>
    <i></i>
    <button class="x" aria-label="Cerrar"><svg width="18" height="18"><path d="M1 1l16 16M17 1 1 17" stroke="#1c1c1c" stroke-width="1.700"/></svg></button>
  </div>
</div>
<script src="app.js"></script>
</body>
</html>
```
FILE: styles.css
```css
* { box-sizing: border-box; }
body { margin: 0; font-family: "Open Sans", "Noto Sans", sans-serif; font-size: 17px; color: #3a3a3a; background: #1b1e1f; }
button, input, select { font: inherit; color: inherit; background: none; border: 0; padding: 0; margin: 0; border-radius: 0; }
button { display: flex; align-items: center; justify-content: center; white-space: nowrap; }
svg { display: block; flex: none; overflow: visible; }
i { font-style: normal; }
.app { height: 100vh; min-height: 640px; display: flex; flex-direction: column; position: relative; overflow: hidden; }
.caret { display: inline-block; flex: none; width: 7px; height: 4px; background: currentColor; clip-path: polygon(0 0, 100% 0, 50% 100%); color: #5a5a5a; }
.dots { width: 4px; height: 16px; background: repeating-linear-gradient(#999 0 3px, transparent 3px 6px); }

/* title bar */
.titlebar { height: 49px; flex: none; background: #1e623d; display: grid; grid-template-columns: 1fr auto 1fr; align-items: center; color: #d4d4d4; }
.quick { display: flex; align-items: center; height: 49px; padding: 0 0 3px 30px; }
.quick .caret { color: #d4d4d4; margin-left: 14px; }
.quick .dim { color: #4a7f61; }
.undo { margin-left: 43px; }
.redo { margin-left: 23px; }
.more { margin-left: 35px; }
.doc { margin: 0; font-size: 17px; font-weight: 400; display: flex; gap: 298px; }
.winctl { display: flex; justify-content: flex-end; align-items: center; gap: 51px; padding: 0 27px 3px 0; }

.tabbar { height: 36px; flex: none; background: #1e623d; display: flex; justify-content: space-between; color: #d4d4d4; }
.tabs { display: grid; grid-template-columns: 94px 69px 88px 168px 101px 78px 84px 68px auto; }
.tabs button { padding-bottom: 2px; }
.tabs .file { padding-right: 6px; }
.tabs .on { background: #cbcbcb; color: #1e623d; }
.tabs .tell { color: #7fa28e; gap: 8px; padding-left: 15px; }
.tabright { display: flex; gap: 17px; align-items: center; }
.share { background: #0d4d28; width: 147px; height: 36px; gap: 6px; justify-content: flex-start; padding: 0 0 2px 7px; color: #d4d4d4; }

/* ribbon */
.ribbon { height: 132px; flex: none; background: #cbcbcb; border-bottom: 1px solid #b4b4b4; display: grid; grid-template-columns: 120px 265px 382px 183px 302px 213px 331px 1fr; }
.group { display: flex; flex-direction: column; background: linear-gradient(#b0b0b0, #b0b0b0) right 4px / 1px 123px no-repeat; }
.body { flex: 1; min-height: 0; }
.group footer { height: 24px; display: flex; align-items: center; justify-content: center; position: relative; color: #5c5c5c; font-size: 15px; }
.group:first-child footer { padding-right: 24px; }
.group:nth-child(2) footer, .group:nth-child(3) footer, .group:nth-child(4) footer { padding-right: 22px; }
.launch { position: absolute; right: 7px; top: 6px; width: 11px; height: 11px; border: solid #6a6a6a; border-width: 1px 0 0 1px; }
.launch::after { content: ""; width: 6px; height: 6px; border: solid #6a6a6a; border-width: 0 1px 1px 0; background: linear-gradient(to top right, transparent 44%, #6a6a6a 44% 56%, transparent 56%); margin: 4px 0 0 4px; }
.clip { display: flex; }
.big { flex-direction: column; justify-content: flex-start; padding-top: 8px; line-height: 24px; }
.big svg { margin-bottom: 3px; }
.big span { display: flex; align-items: center; gap: 5px; }
.big .only { height: 24px; }
.paste { width: 64px; padding-left: 10px; }
.stack { display: flex; flex-direction: column; gap: 3px; padding: 5px 0 0 6px; }
.stack button { height: 30px; gap: 8px; justify-content: flex-start; }
.rows { display: flex; flex-direction: column; gap: 14px; }
.body.rows, .align { padding: 16px 4px 0; }
.row { display: flex; height: 30px; align-items: center; }
.row > button { height: 30px; }
.row > span { display: flex; justify-content: center; }
.w12 { width: 12px; } .w14 { width: 14px; } .w18 { width: 18px; } .w20 { width: 20px; } .w22 { width: 22px; } .w24 { width: 24px; } .w28 { width: 28px; } .w30 { width: 30px; } .w34 { width: 34px; }
.combo { display: grid; height: 31px; }
.combo select { grid-area: 1 / 1; appearance: none; background: #d6d6d6; border: 1px solid #a6a6a6; padding: 1px 0 0 3px; color: #3a3a3a; }
.combo::after { content: ""; grid-area: 1 / 1; justify-self: end; align-self: center; margin-right: 5px; width: 7px; height: 4px; background: #5a5a5a; clip-path: polygon(0 0, 100% 0, 50% 100%); pointer-events: none; }
.font { width: 135px; } .size { width: 61px; } .num { width: 174px; }
.font select { border-right: 0; }
.fmt { font-size: 21px; }
.fmt b { line-height: 28px; margin-top: -4px; }
.sep { width: 1px; height: 22px; background: #a9a9a9; }
.s1 { margin: 0 8px 0 2px; } .s2 { margin: 0 8px 0 1px; } .s3 { margin: 0 6px 0 4px; } .s4 { margin: 0 6px 0 4px; }
.long { height: 74px; margin: 0 7px 0 5px; }
.align { display: flex; }
.pressed { background: #a8a8a8; }
.ab { font-size: 14px; font-weight: 600; fill: #555; }
.text { gap: 3px; justify-content: flex-start; }
.text .caret { margin-left: 5px; }
.money { font-size: 24px; color: #555; }
.zeros { font-size: 13px; color: #555; }
.dec { flex-direction: column; align-items: flex-end; padding-right: 4px; font: 13px/15px "Liberation Sans", Arial, sans-serif; color: #555; }
.dec span { display: flex; align-items: center; height: 15px; gap: 1px; }
.bigs { display: grid; }
.styles { grid-template-columns: 112px 104px 82px; padding-left: 1px; }
.cells { grid-template-columns: 65px 67px 72px; padding-left: 4px; }
.bigs .big, .edit .big { height: 107px; }
.edit { display: flex; }
.edits { width: 135px; padding: 3px 0 0 8px; flex: none; }
.edits button { height: 31px; gap: 4px; }
.edits .far { margin-left: 6px; }
.sort { width: 90px; } .find { width: 98px; }
.az { font: 22px "Liberation Sans", Arial, sans-serif; } .blue { fill: #3c6ea3; font-weight: 700; } .violet { fill: #7c519b; }
.collapse { align-self: end; justify-self: end; margin: 0 11px 7px 0; }

/* formula bar */
.formula { height: 66px; flex: none; background: #c2c2c2; display: flex; align-items: flex-start; padding: 15px 7px 0; }
.namebox, .fx, .bar { height: 36px; background: #d6d6d6; border: 1px solid #a6a6a6; display: flex; align-items: center; }
.namebox { width: 152px; padding: 0 11px 0 6px; justify-content: space-between; }
.namebox input { width: 100px; font-size: 18px; }
.formula .dots { margin: 10px 21px 0 20px; }
.fx { width: 164px; justify-content: space-between; padding: 0 18px 0 17px; }
.fn { font: italic 25px "Liberation Serif", serif; color: #555; }
.bar { flex: 1; margin-left: 4px; padding-right: 6px; }
.bar input { flex: 1; min-width: 0; }

/* sheet */
.work { flex: 1; min-height: 0; display: flex; background: #c2c2c2; padding-right: 3px; }
.sheet { flex: 1; min-width: 0; position: relative; overflow: hidden; border-right: 1px solid #8a8a8a; }
.grid { border-collapse: separate; border-spacing: 0; table-layout: fixed; width: 100%; font: 13px/14px "Liberation Sans", Arial, sans-serif; color: #000; background: #d8d8d8; }
.grid th, .grid td { height: 17px; padding: 2px 0 0; border: solid #b2b2b2; border-width: 0 1px 1px 0; overflow: hidden; white-space: nowrap; vertical-align: bottom; }
.grid th { background: #c2c2c2; font-weight: 400; text-align: center; }
.grid thead th { height: 16px; line-height: 15px; padding: 0; border-bottom-color: #808080; border-right-color: #a0a0a0; }
.grid tbody th { border-right-color: #808080; border-bottom-color: #a0a0a0; }
.grid .tall th, .grid .tall td { height: 34px; }
.grid th.sel { background: #aeaeae; color: #1e623d; }
.grid thead th.sel { border-bottom: 2px solid #1e623d; line-height: 14px; }
.grid tbody th.sel { border-right: 2px solid #1e623d; }
.corner::after { content: ""; display: block; width: 9px; height: 9px; margin: 0 0 3px 15px; background: #9f9f9f; clip-path: polygon(100% 0, 100% 100%, 0 100%); }
.grid td.pa { border-color: transparent; padding-left: 2px; }
.grid td.pb { border-bottom-color: transparent; text-align: right; padding-right: 2px; }
.grid td.hd { background: #b8c4d8; font-weight: 700; border-color: #6f90cc; border-right-width: 0; }
.grid td.hd.pb { text-align: left; padding-left: 3px; }
.grid td.edge { border-bottom-color: #6f90cc; }
.grid td.tot { background: #b8c4d8; font-weight: 700; border-color: #b8c4d8; }
.grid td.wrap { white-space: normal; padding: 0 10px 0 2px; vertical-align: top; }
.wrap div { height: 33px; line-height: 17px; }
.hdcell { display: flex; align-items: flex-end; justify-content: space-between; }
.hdcell button { width: 25px; height: 25px; border: 1px solid #8d8d8d; background: #cdcdcd; }
.grid td.active { position: relative; overflow: visible; }
.active::before { content: ""; position: absolute; inset: -2px; border: 2px solid #1e623d; z-index: 1; }
.active::after { content: ""; position: absolute; right: -3px; bottom: -3px; width: 6px; height: 6px; background: #1e623d; border: solid #d8d8d8; border-width: 1px 0 0 1px; z-index: 1; }

/* chart */
.chart { position: absolute; left: 361px; top: 117px; width: 1444px; height: 273px; margin: 0; background: #d8d8d8; border: 1px solid #b2b2b2; font-family: "Liberation Sans", Arial, sans-serif; }
.field { height: 17px; width: 94px; margin: 8px 0 0 10px; background: linear-gradient(#b4b4b4, #a2a2a2); font: 10px/17px "Open Sans", "Noto Sans", sans-serif; color: #111; justify-content: flex-start; padding-left: 5px; }
.city { width: 136px; justify-content: space-between; padding-right: 5px; }
.city .caret { color: #222; }
.chart figcaption { margin-top: 10px; height: 28px; line-height: 30px; text-align: center; font-size: 24px; font-weight: 700; letter-spacing: 2px; color: #6c6c6c; }
.plot text { font-size: 12px; fill: #4a4a4a; text-anchor: end; }
.plot .axis { font-weight: 700; text-anchor: middle; }
.data { margin-left: 153px; width: 1118px; table-layout: fixed; border-collapse: collapse; font-size: 12px; line-height: 13px; color: #4a4a4a; }
.data th, .data td { font-weight: 400; padding: 0; border: 1px solid #b2b2b2; text-align: center; }
.data thead th { height: 30px; vertical-align: top; padding-top: 4px; border-top: 0; }
.data thead td { width: 43px; border-color: transparent #b2b2b2 #b2b2b2 transparent; border-top: 0; }
.data tbody tr { height: 18px; }
.data tbody th, .data tbody td { padding-bottom: 1px; }
.key { display: inline-block; width: 7px; height: 7px; border: 1px solid #c0392f; background: linear-gradient(45deg, #c0392f 25%, #dcb0ac 25% 60%, #c0392f 60%); margin-right: 3px; }

.vscroll { width: 26px; margin-left: 2px; display: flex; flex-direction: column; background: #b6b6b6; }
.vscroll button, .hscroll button, .thumb { background: #d6d6d6; border: 1px solid #a0a0a0; flex: none; }
.vscroll button { height: 24px; }
.vscroll .thumb { flex: 592 0 0; }
.vscroll .track { flex: 19 0 0; }

/* sheet tabs */
.sheetbar { height: 34px; flex: none; background: #c2c2c2; border-top: 1px solid #808080; border-bottom: 1px solid #a6a6a6; display: flex; align-items: flex-start; padding-right: 30px; }
.arrows { display: flex; gap: 29px; padding: 12px 0 0 31px; width: 118px; }
.sheets { display: grid; grid-template-columns: 92px 80px 48px 48px 49px 79px 48px 48px 59px; border-left: 1px solid #808080; margin-top: 3px; height: 25px; font-size: 18px; }
.sheets button { border-right: 1px solid #808080; padding-bottom: 4px; line-height: 20px; }
.sheets .on { background: #d8d8d8; color: #1e623d; font-weight: 700; border-bottom: 2px solid #1e623d; margin: -4px 0 -1px -1px; padding-bottom: 1px; }
.add { margin: 5px 0 0 41px; }
.sheetbar .dots { margin: 8px 17px 0 auto; }
.hscroll { display: flex; width: 722px; height: 26px; margin-top: 3px; background: #b6b6b6; }
.hscroll button { width: 25px; }
.hscroll .thumb { flex: 605 0 0; }
.hscroll .track { flex: 67 0 0; }

.status { height: 33px; flex: none; background: #cbcbcb; display: flex; align-items: center; padding: 0 18px 0 7px; font-size: 15px; }
.views { margin-left: auto; display: flex; height: 33px; }
.views button { width: 45px; }
.views .on { background: #a9a9a9; }
.minus { margin: 0 4px 0 5px; }
.plus { margin-left: 6px; }
.zoom { appearance: none; width: 150px; height: 20px; background: linear-gradient(#888, #888) 75px 50% / 1px 8px no-repeat, linear-gradient(#888, #888) 0 50% / 100% 1px no-repeat; }
.zoom::-webkit-slider-thumb { appearance: none; width: 6px; height: 17px; background: #5a5a5a; }
.pct { margin-left: 16px; }

/* taskbar */
.taskbar { height: 72px; flex: none; background: linear-gradient(90deg, #1b1e1e 40%, #18202a 60%, #1b1e1e 85%); border-top: 2px solid #3a3c3e; display: flex; align-items: center; color: #dcdcdc; }
.weather { margin: 0 0 8px 15px; width: 44px; }
.start { margin-left: 218px; width: 36px; }
.search { width: 326px; height: 44px; margin-left: 22px; border-radius: 22px; background: #cdcdcd; display: flex; align-items: center; padding: 0 10px 0 16px; color: #444; }
.search input { flex: 1; min-width: 0; margin-left: 13px; font-size: 19px; outline: 0; }
.search input::placeholder { color: #4a4a4a; opacity: 1; }
.apps { display: grid; grid-template-columns: repeat(12, 66px); margin-left: 5px; }
.apps button { height: 60px; position: relative; }
.apps .cur { background: #2a2e33; border: 1px solid #33383c; border-radius: 6px; margin: 0 3px; }
.apps .run::after, .cur::after { content: ""; position: absolute; bottom: 1px; width: 8px; height: 5px; border-radius: 3px; background: #8a8a8a; }
.apps .cur::after { width: 24px; background: #8faab4; }
.badge, .prof { font-size: 15px; fill: #e8e8e8; text-anchor: middle; }
.prof { fill: #a9c4d6; font-weight: 600; }
.pre { font-size: 11px; font-weight: 700; text-anchor: middle; fill: #111; }
.zm { font-size: 11px; font-weight: 600; text-anchor: middle; fill: #e4e8f4; }
.ltr { font-size: 15px; font-weight: 700; text-anchor: middle; fill: #e0e0e0; }
.tray { margin-left: auto; display: flex; align-items: center; padding-right: 30px; line-height: 24px; }
.cloud { margin-left: 27px; }
.lang { margin-left: 27px; width: 36px; text-align: center; font-size: 16px; }
.wifi { margin-left: 26px; } .snd { margin-left: 12px; } .bat { margin-left: 11px; }
.clock { width: 94px; margin-left: 12px; text-align: right; white-space: nowrap; }
.bell { margin-left: 14px; }
.z1, .z2 { font: 700 12px "Liberation Sans", Arial, sans-serif; text-anchor: middle; fill: #1b1e1f; }
.z2 { fill: #dcdcdc; }

/* overlays */
.mark { position: absolute; right: 79px; bottom: 118px; width: 343px; color: rgba(120, 120, 120, .55); white-space: nowrap; pointer-events: none; }
.mark p { margin: 0; font-size: 29px; line-height: 36px; }
.mark p + p { font-size: 21px; line-height: 32px; }
.snip { position: absolute; top: 14px; left: 0; right: 0; margin: 0 auto; width: 298px; height: 65px; border-radius: 12px; background: #cfe4d7; display: flex; align-items: center; box-shadow: 0 0 0 1px #1a5434; }
.modes { display: flex; align-items: center; width: 133px; height: 65px; border: 4px solid #1a1a1a; outline: 2px solid #f4f8f5; outline-offset: -6px; border-radius: 6px 0 0 6px; padding-left: 5px; background: #c6decf; }
.modes button { width: 57px; height: 48px; }
.modes .on { background: #f0f5f2; border: 1px solid #b8c8be; border-radius: 6px; position: relative; }
.modes .on::after { content: ""; position: absolute; bottom: 2px; width: 24px; height: 4px; border-radius: 2px; background: #44607f; }
.shape { margin-left: 19px; }
.snip i { width: 1px; height: 36px; background: #b5cbbd; margin-left: 33px; }
.snip .x { margin-left: 27px; }
```
FILE: app.js
```js
const goals = [
  ["CARTAGENA", 12, "CARTAGE<br>NA"], ["TUNJA", 13], ["NEIVA", 13], ["RIONEGRO", 13, "RIONEGR<br>O"],
  ["TULUA", 19], ["ARMENIA", 41], ["SANTA MARTA", 41, "SANTA<br>MARTA"], ["MANIZALES", 55, "MANIZAL<br>ES"],
  ["IBAGUE", 58], ["PEREIRA", 120], ["BUCARAMANGA", 158, "BUCARA<br>MANGA"], ["CUCUTA", 207],
  ["BARRANQUILLA", 229, "BARRAN<br>QUILLA"], ["CALI", 249], ["MEDELLIN", 509, "MEDELLI<br>N"], ["BOGOTA", 535]
];

// Worksheet
const cols = "ABCDEFGHIJKLMNOPQR".split("");
const widths = [28, 138, 117, 79, 403].concat(Array(14).fill(79));
let html = "<colgroup>" + widths.map(w => `<col style="width:${w}px">`).join("") + "<col></colgroup>";
html += '<thead><tr><th class="corner"></th>' + cols.map(c => `<th${c === "P" ? ' class="sel"' : ""}>${c}</th>`).join("") + "<th></th></tr></thead><tbody>";
const filter = '<button aria-label="Filtro"><svg width="20" height="16"><path d="M2 10h9l-4.500 4z" fill="#555"/><path d="M15 14V3M12 5l3-4 3 4" fill="none" stroke="#555" stroke-width="2"/></svg></button>';
for (let r = 1; r <= 36; r++) {
  const cells = cols.map(() => ["", ""]);
  if (r === 3) {
    cells[0] = ["pa hd", `<div class="hdcell"><span>Etiquetas de fila</span>${filter}</div>`];
    cells[1] = ["pb hd", "Suma de GOLES"];
    cells[3] = ["wrap", "<div><b>P5: ¿Cuál es la ciudad de los equipos a la que se le atribuyen la mayor cantidad de goles?</b></div>"];
  } else if (r >= 4 && r <= 19) {
    const edge = r === 19 ? " edge" : "";
    cells[0] = ["pa" + edge, goals[r - 4][0]];
    cells[1] = ["pb" + edge, goals[r - 4][1]];
    if (r === 4) cells[3] = ["wrap", "<div><b>Análisis.</b> Bogotá es la ciudad con mayor cantidad de goles con un total de 535.</div>"];
  } else if (r === 20) {
    cells[0] = ["pa tot", "Total general"];
    cells[1] = ["pb tot", "2272"];
  } else if (r === 33) {
    cells[15] = ["active", ""];
  }
  html += `<tr${r === 3 || r === 4 ? ' class="tall"' : ""}><th${r === 33 ? ' class="sel"' : ""}>${r}</th>`
    + cells.map(([c, t]) => `<td${c ? ` class="${c}"` : ""}>${t}</td>`).join("") + "<td></td></tr>";
}
document.getElementById("grid").innerHTML = html + "</tbody>";

// 3-D column plot
const base = 125, left = 197, right = 1271, dx = 22, dy = 17, unit = 0.1467;
let svg = `<defs>
  <pattern id="front" width="4" height="4" patternUnits="userSpaceOnUse" patternTransform="rotate(38)"><path d="M0 0h4v4H0z" fill="#dbbab7"/><path d="M0 0h1.500v4H0z" fill="#cc5c53"/></pattern>
  <pattern id="dark" width="4" height="4" patternUnits="userSpaceOnUse" patternTransform="rotate(-40)"><path d="M0 0h4v4H0z" fill="#958a88"/><path d="M0 0h1.600v4H0z" fill="#93443e"/></pattern>
  <pattern id="side" width="3" height="3" patternUnits="userSpaceOnUse" patternTransform="rotate(20)"><path d="M0 0h3v3H0z" fill="#8c8180"/><path d="M0 0h1.300v3H0z" fill="#7d4440"/></pattern></defs>`;
for (let v = 0; v <= 600; v += 100) {
  const y = base - v * unit;
  svg += `<path d="M${left} ${y}L${left + dx} ${y - dy}H${right + dx}" fill="none" stroke="${v ? "#b8b8b8" : "#a0a0a0"}" stroke-width="${v ? 1 : 2}"/>`;
  svg += `<text x="186" y="${y + 4}">${v}</text>`;
}
svg += `<path d="M${left} ${base}H${right}L${right + dx} ${base - dy}" fill="none" stroke="#a0a0a0" stroke-width="2"/>`;
goals.forEach(([, v], i) => {
  const x = 217 + i * 67.2, b = base - 4, h = v * 0.1477, t = b - h, w = 35;
  svg += `<g stroke="#c0392f"><path d="M${x} ${t}h${w}V${b}h${-w}z" fill="url(#front)"/>
    <path d="M${x} ${t}l11-9h${w}l-11 9z" fill="url(#dark)"/>
    <path d="M${x + w} ${t}l11-9v${h}l-11 9z" fill="url(#side)"/></g>`;
});
svg += '<text class="axis" transform="translate(158 82) rotate(-90)">Título del eje</text>';
document.getElementById("plot").innerHTML = svg;

// Data table under the plot
document.getElementById("data").innerHTML =
  "<thead><tr><td></td>" + goals.map(g => `<th>${g[2] || g[0]}</th>`).join("") + "</tr></thead>"
  + '<tbody><tr><th><i class="key"></i>Total</th>' + goals.map(g => `<td>${g[1]}</td>`).join("") + "</tr></tbody>";
```
